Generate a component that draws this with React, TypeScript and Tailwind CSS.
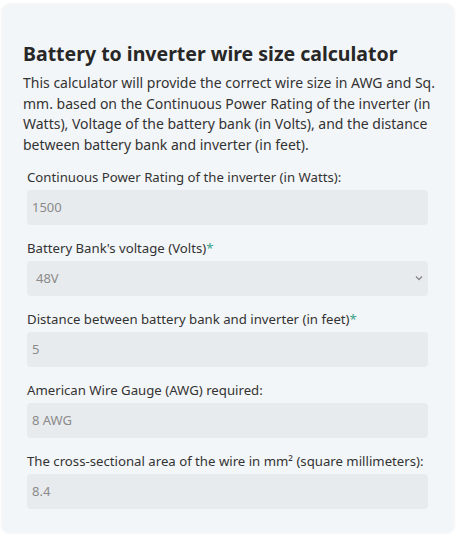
import React from "react";

const fields = [
  { label: "Continuous Power Rating of the inverter (in Watts):", value: "1500" },
  { label: "Battery Bank's voltage (Volts)", value: "48V", required: true, select: true },
  { label: "Distance between battery bank and inverter (in feet)", value: "5", required: true },
  { label: "American Wire Gauge (AWG) required:", value: "8 AWG" },
  { label: "The cross-sectional area of the wire in mm² (square millimeters):", value: "8.4" },
];

export default function App() {
  return (
    <div className="h-[540px] w-[459px] bg-white pt-1 pl-0.5" style={{ fontFamily: '"Noto Sans", sans-serif' }}>
      <div className="h-[529px] w-[452px] rounded-lg bg-[#f3f6f8] px-[21px] pt-[39px] shadow-[0_0_3px_rgba(0,0,0,0.08)]">
        <h2 className="text-[19.5px] font-bold leading-[22px] text-[#272727]">Battery to inverter wire size calculator</h2>
        <p className="mt-[8px] -mr-[14px] text-[14px] leading-[20.7px] text-[#333]">
          This calculator will provide the correct wire size in AWG and Sq. mm. based on the Continuous Power Rating of the inverter (in Watts), Voltage of the battery bank (in Volts), and the distance between battery bank and inverter (in feet).
        </p>
        <div className="mt-[10px] flex flex-col gap-[12px] pl-1 pr-[5px]">
          {fields.map((f) => (
            <div key={f.label}>
              <div className="whitespace-nowrap text-[13.2px] leading-[22px] text-[#333]">
                {f.label}
                {f.required && <span className="text-[#3aa38a]">*</span>}
              </div>
              <div className={`mt-[2px] flex h-[35px] items-center justify-between rounded bg-[#e8ebee] pr-[2px] text-[13px] text-[#8a8a8a] ${f.select ? "pl-[9px]" : "pl-[5px]"}`}>
                <span>{f.value}</span>
                {f.select && (
                  <svg width="10" height="10" viewBox="0 0 10 10" className="mr-[2px]">
                    <path d="M2 3.5 5 6.5 8 3.5" fill="none" stroke="#888" strokeWidth="1.3" />
                  </svg>
                )}
              </div>
            </div>
          ))}
        </div>
      </div>
    </div>
  );
}
